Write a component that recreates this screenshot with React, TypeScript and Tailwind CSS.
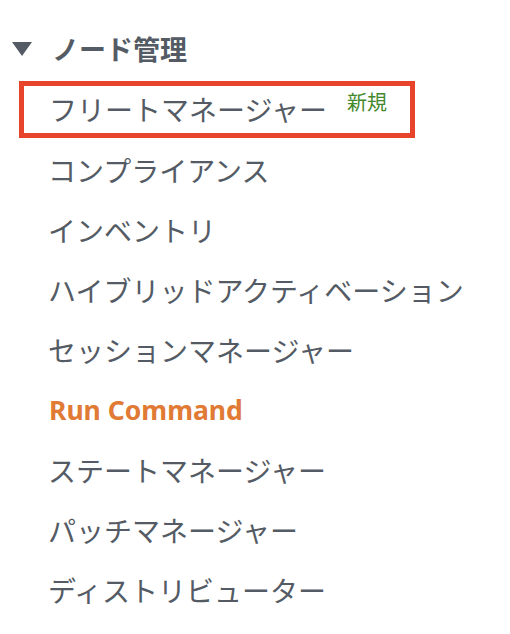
const items = [
  "コンプライアンス",
  "インベントリ",
  "ハイブリッドアクティベーション",
  "セッションマネージャー",
];

const lowerItems = ["ステートマネージャー", "パッチマネージャー", "ディストリビューター"];

function Caret() {
  return (
    <svg width="20" height="14" viewBox="0 0 20 14" className="shrink-0">
      <polygon points="0,0 20,0 10,14" fill="#545b64" />
    </svg>
  );
}

export default function App() {
  return (
    <div
      className="w-[510px] h-[634px] bg-white pt-[19px] text-[#545b64]"
      style={{ fontFamily: '"Noto Sans", "Noto Sans CJK JP", sans-serif' }}
    >
      <div className="h-[60px] flex items-center pl-[12px] gap-[20px]">
        <Caret />
        <span className="text-[27px] font-bold leading-none">ノード管理</span>
      </div>
      <ul>
        <li className="h-[60px] flex items-center">
          <div className="ml-[19px] w-[396px] h-[57px] border-[5px] border-[#e8432b] flex items-center pl-[25px] pt-[2px]">
            <span className="text-[28px] leading-none">フリートマネージャー</span>
            <span className="ml-[20px] text-[20px] leading-none text-[#43892b] -mt-[14px]">新規</span>
          </div>
        </li>
        {items.map((label) => (
          <li key={label} className="h-[60px] flex items-center pl-[48px] pt-[3px]">
            <span className="text-[28px] leading-none">{label}</span>
          </li>
        ))}
        <li className="h-[60px] flex items-center pl-[49px] pt-[3px]">
          <span className="text-[26.5px] font-bold leading-none text-[#e07a34]">Run Command</span>
        </li>
        {lowerItems.map((label) => (
          <li key={label} className="h-[60px] flex items-center pl-[48px] pt-[3px]">
            <span className="text-[28px] leading-none">{label}</span>
          </li>
        ))}
      </ul>
    </div>
  );
}
